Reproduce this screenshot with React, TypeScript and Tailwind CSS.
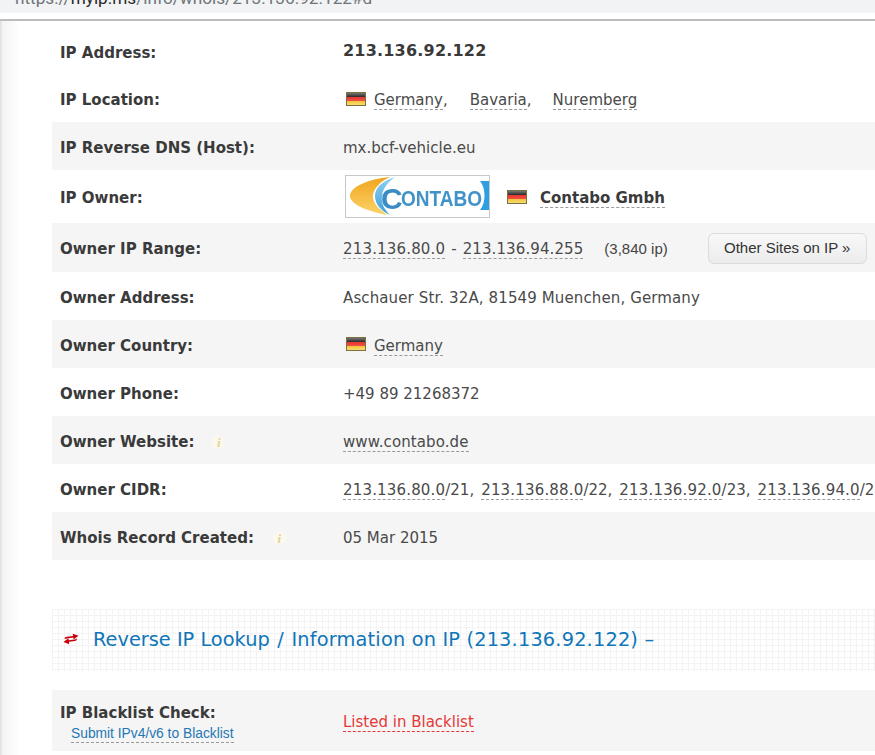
import React from "react";

const Flag = ({ className = "" }: { className?: string }) => (
  <span className={"inline-flex flex-col w-[20px] h-[14px] border border-[#7a7040] shrink-0 overflow-hidden mb-[4px] " + className}>
    <span className="flex-1 bg-gradient-to-b from-[#777] to-[#2b2b2b]" />
    <span className="flex-1 bg-gradient-to-b from-[#e8342c] to-[#f0504a]" />
    <span className="flex-1 bg-gradient-to-b from-[#f4c430] to-[#f6dc70]" />
  </span>
);

const D = ({ children, className = "" }: { children: React.ReactNode; className?: string }) => (
  <span className={"border-b border-dashed border-[#999] leading-[18px] inline-block " + className}>{children}</span>
);

const Info = () => (
  <span className="inline-flex items-center justify-center w-[13px] h-[13px] rounded-full bg-[#fbf8ee] text-[#e6d29c] text-[13px] font-bold italic font-['Liberation_Serif',serif] leading-none">
    i
  </span>
);

const Row = ({
  label,
  shade,
  h,
  extra,
  children,
}: {
  label: React.ReactNode;
  shade?: boolean;
  h: string;
  extra?: React.ReactNode;
  children: React.ReactNode;
}) => (
  <div className={"flex items-center w-[900px] pl-2 pt-1 " + h + " " + (shade ? "bg-[#f5f5f5]" : "")}>
    <div className="w-[283px] shrink-0 font-bold text-[#3a3a3a] flex items-center">
      {label}
      {extra}
    </div>
    <div className="flex items-center whitespace-nowrap text-[#4a4a4a]">{children}</div>
  </div>
);

const Logo = () => (
  <span className="inline-block w-[145px] h-[43px] border border-[#c8c8c8] bg-white overflow-hidden shrink-0 mb-[4px]">
    <svg width="143" height="41" viewBox="0 0 143 41">
      <defs>
        <linearGradient id="sw" x1="0" y1="0" x2="0" y2="1">
          <stop offset="0" stopColor="#f0a51e" />
          <stop offset="1" stopColor="#fcd36a" />
        </linearGradient>
        <linearGradient id="cr" x1="0" y1="0" x2="0" y2="1">
          <stop offset="0" stopColor="#8fd0f2" />
          <stop offset="1" stopColor="#3f9ed8" />
        </linearGradient>
        <filter id="bl"><feGaussianBlur stdDeviation="0.5" /></filter>
      </defs>
      <path d="M44 1 C22 3 4 11 4 20 C4 29 24 36 42 39 C32 33 26 26 27 19 C28 12 35 5 44 1Z" fill="url(#sw)" />
      <path d="M49 1 C36 5 29 12 29 20 C29 28 35 35 44 39 C38 33 35 27 36 20 C37 12 42 6 49 1Z" fill="url(#cr)" />
      <text x="35" y="33" fontFamily="'Liberation Sans', sans-serif" fontWeight="700" fontSize="30" fill="#3b8cc4" filter="url(#bl)">C</text>
      <text x="55" y="30" fontFamily="'Liberation Sans', sans-serif" fontWeight="700" fontSize="22" fill="#4192c8" filter="url(#bl)" textLength="81" lengthAdjust="spacingAndGlyphs">ONTABO</text>
      <path d="M134 5 L143 5 L143 34 L134 34 C140 27 140 12 134 5Z" fill="#2f9fe3" />
    </svg>
  </span>
);

const cidrs = [
  ["213.136.80.0", "/21,"],
  ["213.136.88.0", "/22,"],
  ["213.136.92.0", "/23,"],
  ["213.136.94.0", "/23"],
];

export default function App() {
  return (
    <div className="w-[875px] h-[755px] overflow-hidden bg-white font-['DejaVu_Sans',sans-serif] text-[15px]">
      <div className="h-[13px] bg-[#f1f3f4] overflow-hidden pl-[15px]">
        <div className="font-['Roboto',sans-serif] text-[17.2px] leading-[18px] text-[#70757a] mt-[-11px] whitespace-nowrap">
          https://<span className="text-[#2a2a2a]">myip.ms</span>/info/whois/213.136.92.122#d
        </div>
      </div>
      <div className="h-[6px]" />
      <div className="h-[2px] bg-[#bdbdbd]" />
      <div className="flex h-[734px]">
        <div className="w-[20px] shrink-0 border-l-2 border-[#e4e4e4] bg-gradient-to-r from-[#f3f3f3] to-white" />
        <div className="ml-[32px] w-[823px] overflow-hidden">
          <div className="h-[6px]" />
          <Row label="IP Address:" h="h-[48px]">
            <span className="text-[16px] tracking-[0.2px] text-[#3a3a3a] font-bold mb-[4px]">213.136.92.122</span>
          </Row>
          <Row label="IP Location:" h="h-[47px]">
            <span className="ml-[3px] flex items-center">
              <Flag />
              <D className="ml-[8px]">Germany</D>
              <span>,</span>
              <D className="ml-[22px]">Bavaria</D>
              <span>,</span>
              <D className="ml-[21px]">Nuremberg</D>
            </span>
          </Row>
          <Row label="IP Reverse DNS (Host):" shade h="h-[48px]">
            mx.bcf-vehicle.eu
          </Row>
          <Row label="IP Owner:" h="h-[53px]">
            <span className="ml-[2px] flex items-center">
              <Logo />
              <Flag className="ml-[17px]" />
              <D className="ml-[13px] font-bold text-[#3a3a3a]">Contabo Gmbh</D>
            </span>
          </Row>
          <Row label="Owner IP Range:" shade h="h-[49px]">
            <D className="tracking-[0.17px]">213.136.80.0</D>
            <span className="mx-[6px]">-</span>
            <D className="tracking-[0.1px]">213.136.94.255</D>
            <span className="ml-[21px] font-['Liberation_Sans',sans-serif] text-[15px] text-[#444]">(3,840 ip)</span>
            <button className="ml-[40px] mb-[3px] w-[159px] h-[31px] rounded-[6px] border border-[#dcdcdc] bg-gradient-to-b from-[#f8f8f8] to-[#ececec] font-['Liberation_Sans',sans-serif] text-[15px] text-[#333]">
              Other Sites on IP »
            </button>
          </Row>
          <Row label="Owner Address:" h="h-[48px]">
            <span className="tracking-[0.12px]">Aschauer Str. 32A, 81549 Muenchen, Germany</span>
          </Row>
          <Row label="Owner Country:" shade h="h-[48px]">
            <span className="ml-[3px] flex items-center">
              <Flag />
              <D className="ml-[8px]">Germany</D>
            </span>
          </Row>
          <Row label="Owner Phone:" h="h-[48px]">
            +49 89 21268372
          </Row>
          <Row
            label="Owner Website:"
            shade
            h="h-[48px]"
            extra={<span className="ml-[18px] flex"><Info /></span>}
          >
            <D className="tracking-[0.1px]">www.contabo.de</D>
          </Row>
          <Row label="Owner CIDR:" h="h-[48px]">
            {cidrs.map(([ip, suffix]) => (
              <span key={ip} className="mr-[7px]">
                <D className="tracking-[0.17px]">{ip}</D>
                {suffix}
              </span>
            ))}
          </Row>
          <Row
            label="Whois Record Created:"
            shade
            h="h-[48px]"
            extra={<span className="ml-[19px] flex"><Info /></span>}
          >
            05 Mar 2015
          </Row>
          <div className="h-[49px]" />
          <div className="h-[62px] w-[900px] flex items-center pl-[11px] bg-white bg-[linear-gradient(#f3f3f3_1px,transparent_1px),linear-gradient(90deg,#f3f3f3_1px,transparent_1px)] bg-[size:6px_6px]">
            <svg width="16" height="12" viewBox="0 0 16 12" className="shrink-0 mb-[2px]">
              <path d="M1.5 6 C1.5 4.5 2.5 4 4 3.8 L10 3 L9.8 0.8 L15.5 2.8 L10.6 6.5 L10.3 4.6 L4 5.4 Z" fill="#c8000a" />
              <path d="M14 5.5 C14 7 13.2 7.8 12 8 L6 8.8 L6.2 11.2 L0.5 9 L5.4 5.3 L5.7 7.2 L12 6.4 Z" fill="#c8000a" />
            </svg>
            <span className="ml-[14px] text-[19.35px] text-[#0f76b8] whitespace-nowrap">
              Reverse IP Lookup<span className="mx-[1.5px]"> / </span><span className="tracking-[0.17px]">Information on IP (213.136.92.122) –</span>
            </span>
          </div>
          <div className="h-[19px]" />
          <div className="flex items-center w-[900px] h-[61px] pl-2 pt-1 bg-[#f5f5f5]">
            <div className="w-[283px] shrink-0">
              <div className="font-bold text-[#3a3a3a] leading-[20px] mt-[2px]">IP Blacklist Check:</div>
              <div className="ml-[11px] mt-[1px] font-['Liberation_Sans',sans-serif] text-[13.8px] text-[#1f78b4]">
                <span className="border-b border-dashed border-[#999] inline-block leading-[16px]">Submit IPv4/v6 to Blacklist</span>
              </div>
            </div>
            <span className="border-b border-dashed border-[#e33] text-[#e53935] leading-[18px] inline-block">Listed in Blacklist</span>
          </div>
        </div>
      </div>
    </div>
  );
}
